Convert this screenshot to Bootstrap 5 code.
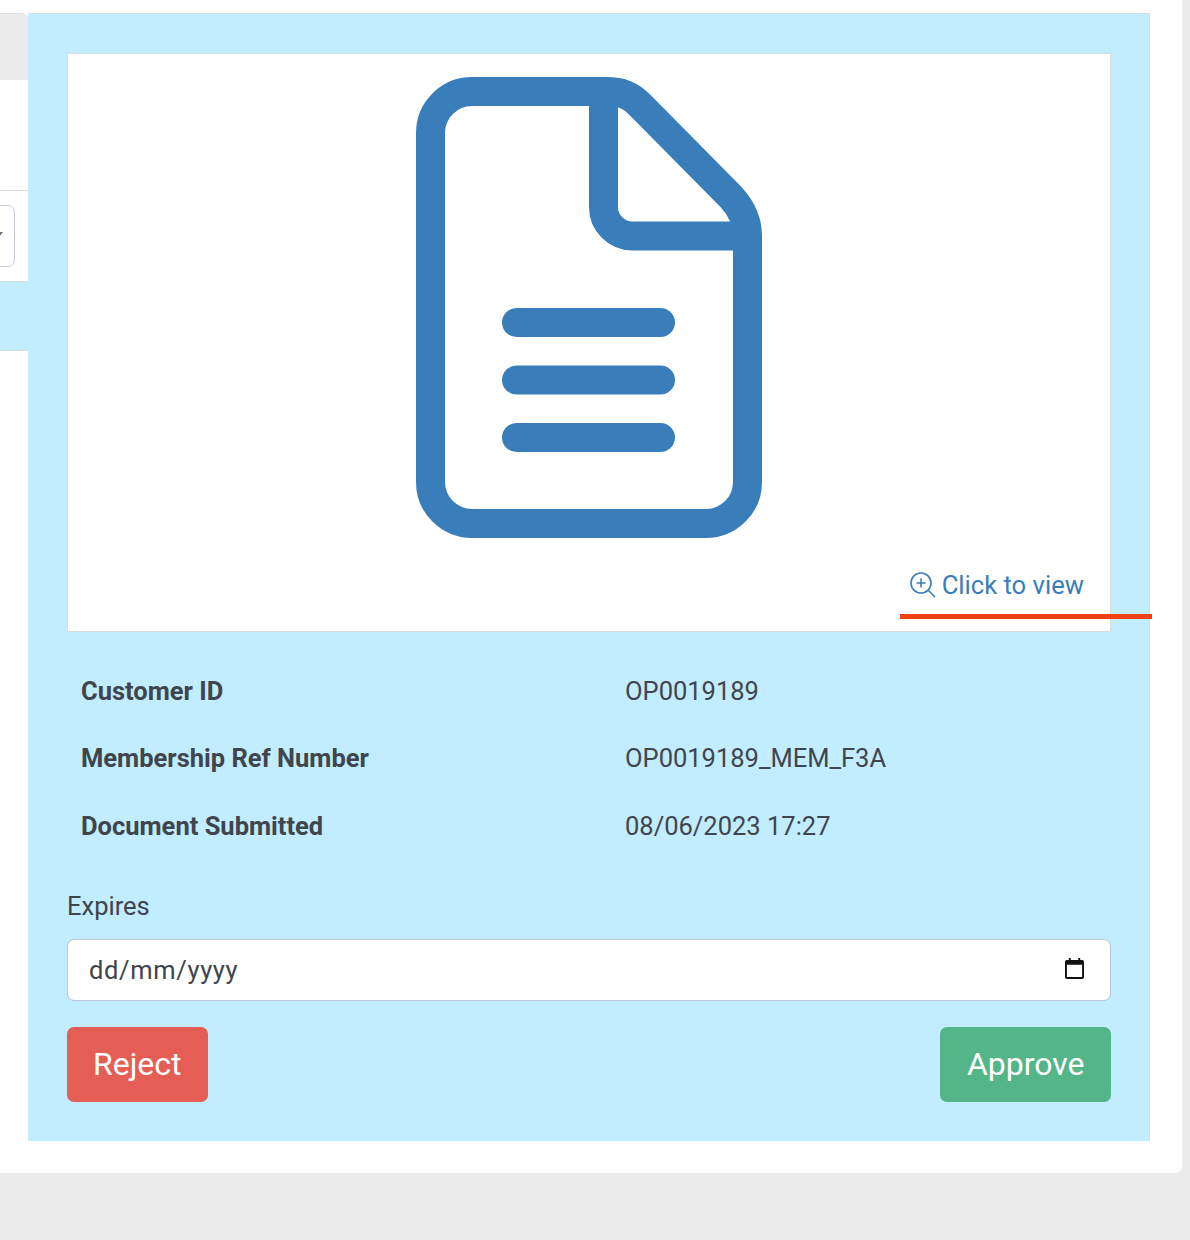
<!doctype html>
<html lang="en-GB">
<head>
<meta charset="utf-8">
<title>Document review</title>
<link href="https://cdn.jsdelivr.net/npm/bootstrap@5.3.0/dist/css/bootstrap.min.css" rel="stylesheet">
<style>
html,body{height:1240px;overflow:hidden}
body{background:#ebebeb;font-family:Roboto,"Liberation Sans",sans-serif;color:#3f454d}
.sheet{width:1182px;height:1173px;background:#fff;border-radius:0 0 7px 0;padding:13px 32px 32px 0}
.side-col{width:28px;flex:none;overflow:hidden}
.side-head{height:67px;background:#ebebeb;border-top:1px solid #dde0e4;border-top-right-radius:6px}
.side-gap{height:110px}
.side-select{height:91px;border-top:1px solid #d9dde1;padding-top:14px}
.fake-select{display:block;width:60px;height:62px;margin-left:-45px;border:1px solid #c3ccd5;border-radius:7px;background:#fff;position:relative}
.fake-select::after{content:"";position:absolute;right:11px;top:26px;border:4px solid transparent;border-top:5px solid #6b7177}
.side-band{height:70px;background:#c2ecff;border-top:1px solid #d9dde1;border-bottom:1px solid #d9dde1}
.review-panel{width:1122px;height:1128px;background:#c2ecff;border-top:1px solid #d5dce2;border-right:1px solid #d5dce2;padding:39px 38px 0 39px}
.doc-box{height:579px;background:#fff;border:1px solid #d5dce2;position:relative;padding-top:23px}
.doc-icon{display:block;margin:0 auto}
.view-link{position:absolute;right:26px;top:516px;color:#3a7dbb;font-size:25.6px;line-height:30px;text-decoration:none;display:flex;align-items:center;gap:6px}
.note-line{position:absolute;left:832px;top:560px;width:252px;height:5px;background:#f04015}
.info-list{padding:25.7px 14px 0;margin:0}
.info-row{height:67.5px;font-size:25.5px;line-height:67.5px;margin:0}
.info-row dt{width:544px;flex:none;font-weight:700;margin:0}
.info-row dd{margin:0}
.expire-label{display:block;font-size:25.5px;line-height:30px;margin:31px 0 18px;color:#3f454d}
.date-wrap{position:relative}
.date-field{height:62px;font-size:25.5px;letter-spacing:.65px;font-family:inherit;color:#3f454d;border-color:#bcc8d4;border-radius:7px;padding:0 21px}
.date-field::placeholder{color:#3f454d;opacity:1}
.date-icon{position:absolute;right:27px;top:19px}
.action-row{margin-top:26px}
.act-btn{height:75px;font-size:32px;line-height:1;border:0;border-radius:7px;color:#fff}
.act-reject,.act-reject:hover{background:#e55e55;color:#fff;padding:0 26px 2px}
.act-approve,.act-approve:hover{background:#53b588;color:#fff;padding:0 26.5px 2px}
</style>
</head>
<body>
<div class="sheet d-flex">
  <div class="side-col">
    <div class="side-head"></div>
    <div class="side-gap"></div>
    <div class="side-select"><span class="fake-select"></span></div>
    <div class="side-band"></div>
  </div>
  <main class="review-panel">
    <div class="doc-box">
      <svg class="doc-icon" width="346" height="461" viewBox="0 0 346 461" fill="none" stroke="#3a7dbb" stroke-width="29" stroke-linejoin="round" aria-hidden="true">
        <path d="M56 14.5H190C205 14.5 215 18 225 29L315 120C326 132 331.5 144 331.5 159V405A41.5 41.5 0 0 1 290 446.5H56A41.5 41.500 0 0 1 14.5 405V56A41.5 41.5 0 0 1 56 14.5Z"/>
        <path d="M187.5 14.5V130A29 29 0 0 0 216.5 159H331.5"/>
        <path d="M100.5 245.5H244.5M100.5 303H244.5M100.5 360.5H244.5" stroke-linecap="round"/>
      </svg>
      <a class="view-link" href="#">
        <svg width="26" height="26" viewBox="0 0 26 26" fill="none" stroke="#3a7dbb" stroke-width="1.6" aria-hidden="true">
          <circle cx="11" cy="11" r="10"/><path d="M11 6.5V15.500M6.500 11H15.500M18.300 18.300L25 25"/>
        </svg>
        Click to view
      </a>
      <div class="note-line"></div>
    </div>
    <dl class="info-list">
      <div class="info-row d-flex"><dt>Customer ID</dt><dd>OP0019189</dd></div>
      <div class="info-row d-flex"><dt>Membership Ref Number</dt><dd>OP0019189_MEM_F3A</dd></div>
      <div class="info-row d-flex"><dt>Document Submitted</dt><dd>08/06/2023 17:27</dd></div>
    </dl>
    <label class="expire-label" for="expires">Expires</label>
    <div class="date-wrap">
      <input id="expires" class="form-control date-field" type="text" placeholder="dd/mm/yyyy">
      <svg class="date-icon" width="19" height="21" viewBox="0 0 20 22" aria-hidden="true">
        <path fill="#111" d="M4 0h2v2h8V0h2v2h2a2 2 0 0 1 2 2v16a2 2 0 0 1-2 2H2a2 2 0 0 1-2-2V4a2 2 0 0 1 2-2h2zM2 7v13h16V7z"/>
      </svg>
    </div>
    <div class="action-row d-flex justify-content-between">
      <button type="button" class="btn act-btn act-reject">Reject</button>
      <button type="button" class="btn act-btn act-approve">Approve</button>
    </div>
  </main>
</div>
<script src="https://cdn.jsdelivr.net/npm/bootstrap@5.3.0/dist/js/bootstrap.bundle.min.js"></script>
</body>
</html>
